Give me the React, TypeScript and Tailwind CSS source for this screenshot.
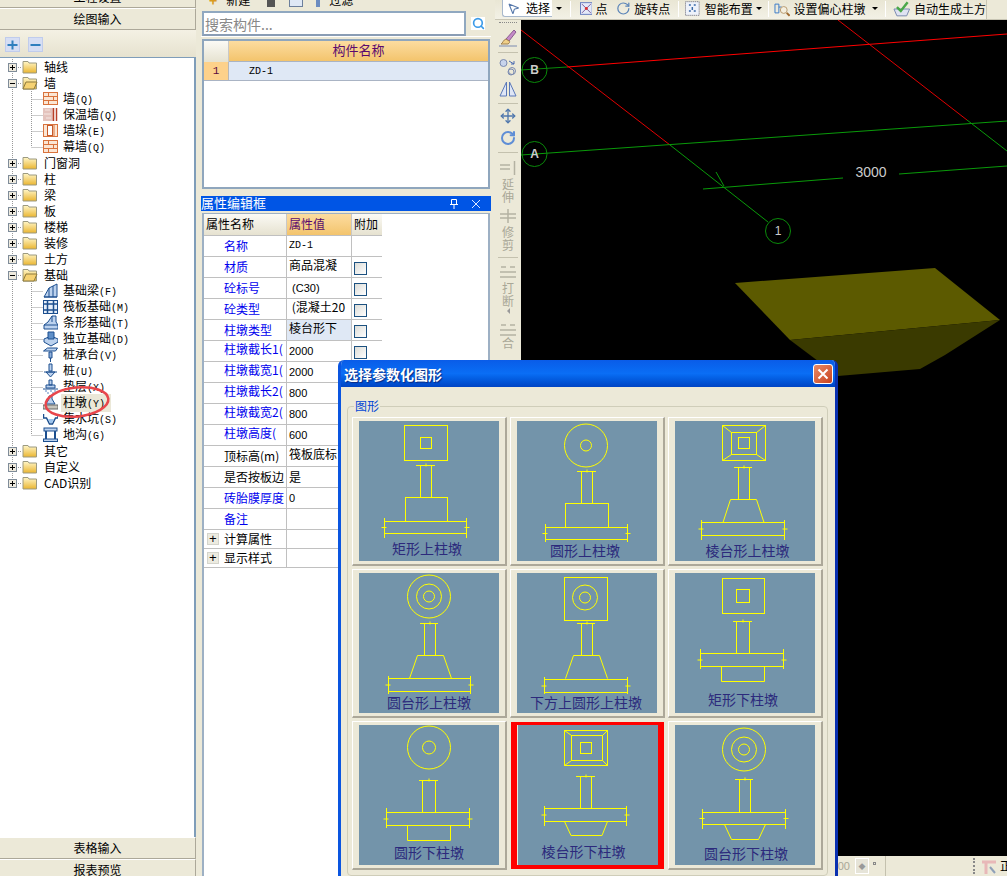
import { MousePointer2, Search, Move, RotateCw } from "lucide-react";
import type { ReactNode } from "react";

const monoText = "font-['Liberation_Mono',monospace] text-[10px]";

const Folder = ({ open }: { open?: boolean }) => (
  <svg width="16" height="14" viewBox="0 0 16 14" className="shrink-0">
    <defs>
      <linearGradient id="fold" x1="0" y1="0" x2="0" y2="1">
        <stop offset="0" stopColor="#fff6c8" />
        <stop offset="1" stopColor="#eab530" />
      </linearGradient>
    </defs>
    <path d="M1 3V1.5h5L7 3h7.5v10H1z" fill="url(#fold)" stroke="#9c9a80" />
    {open && <path d="M1 13l3-7h11l-3 7z" fill="#f6d272" stroke="#8c7a40" />}
  </svg>
);

// dotted tree lines + expander box
const Guide = ({ sign, last, child, childLast }: { sign?: string; last?: boolean; child?: boolean; childLast?: boolean }) => (
  <svg width={child ? 43 : 22} height="16" className="shrink-0">
    <g stroke="#999" strokeDasharray="1 1">
      <line x1="12.5" y1="0" x2="12.5" y2={last ? 8 : 16} />
      {child ? (
        <>
          <line x1="31.5" y1="0" x2="31.5" y2={childLast ? 8 : 16} />
          <line x1="31.5" y1="8.5" x2="43" y2="8.5" />
        </>
      ) : (
        <line x1="12" y1="8.5" x2="22" y2="8.5" />
      )}
    </g>
    {!child && (
      <>
        <rect x="8.5" y="4.5" width="8" height="8" fill="#eeeade" stroke="#7f8c99" />
        <line x1="10" y1="8.5" x2="15" y2="8.5" stroke="#000" />
        {sign === "+" && <line x1="12.5" y1="6" x2="12.5" y2="11" stroke="#000" />}
      </>
    )}
  </svg>
);

const ItemIcon = ({ kind }: { kind: string }) => {
  const blue = { fill: "#bcd2ee", stroke: "#1c4f8f" };
  let body: ReactNode = null;
  if (kind === "brick")
    body = (
      <>
        <rect x="0.5" y="1.5" width="14" height="12" fill="#fbe6d4" stroke="#d9733d" />
        <path d="M1 5.5h13M1 9.5h13M5.5 2v3.5M10.5 5.5v4M5.5 9.5v4" stroke="#d9733d" fill="none" />
      </>
    );
  if (kind === "insul")
    body = (
      <>
        <rect x="0" y="1" width="10" height="13" fill="#e4c3bd" />
        <path d="M2 3h5M1 7h7M3 11h5" stroke="#f5e8e4" />
        <path d="M10.5 1v13M13.5 1v13" stroke="#b8402a" strokeWidth="1.5" />
      </>
    );
  if (kind === "pilaster")
    body = (
      <>
        <rect x="0.5" y="1.5" width="14" height="12" fill="#fbe6d4" stroke="#d9733d" />
        <rect x="4.5" y="2.5" width="5" height="10" fill="#fff" stroke="#c65a2a" />
        <path d="M11 2v11" stroke="#d9733d" />
      </>
    );
  if (kind === "beam")
    body = (
      <>
        <path d="M1 14L6 5l8-4v13z" {...blue} />
        <path d="M6 5v9M10 3v11M1 14h13" stroke="#1c4f8f" fill="none" />
      </>
    );
  if (kind === "raft")
    body = (
      <>
        <rect x="0.5" y="1.5" width="14" height="13" fill="#e6effa" stroke="#1c4f8f" />
        <path d="M0 5h15M0 11h15M4.5 1v13M10.5 1v13" stroke="#1c4f8f" strokeWidth="1.5" />
      </>
    );
  if (kind === "strip")
    body = (
      <>
        <path d="M5 7l4-6h4v6l2 3v4H1v-4z" {...blue} />
        <path d="M9 1v6M1 10h14" stroke="#1c4f8f" />
      </>
    );
  if (kind === "iso")
    body = (
      <>
        <path d="M1 8l7-3 7 3v3l-7 4-7-4z" {...blue} />
        <path d="M5 1h6v7H5z" fill="#5f8fc8" stroke="#1c4f8f" />
      </>
    );
  if (kind === "cap")
    body = (
      <>
        <path d="M0.5 4l4-3h10l-2 3z" {...blue} />
        <path d="M6 5h3v6H6zM7.5 11v4" fill="#8fb0dc" stroke="#1c4f8f" />
      </>
    );
  if (kind === "pile")
    body = (
      <>
        <path d="M6 1h3v7H6zM3 9h9l-4.5 5z" {...blue} />
        <path d="M1 9h13" stroke="#1c4f8f" />
      </>
    );
  if (kind === "cushion")
    body = (
      <>
        <path d="M6 1h3v5H6zM3 6h9v3H3z" {...blue} />
        <path d="M0 10h15" stroke="#1c4f8f" />
        <path d="M2 12h2M7 12h2M11 12h2M4 14h2M9 14h2" stroke="#5a88c4" />
      </>
    );
  if (kind === "pier")
    body = (
      <>
        <path d="M6 1h3v3l3 5H3l3-5z" {...blue} />
        <rect x="0" y="10" width="15" height="4" fill="#c8c5bb" stroke="#666" />
      </>
    );
  if (kind === "sump")
    body = (
      <>
        <path d="M0.5 3v4h3l3 6h3l3-6h2.5V3" fill="none" stroke="#1c4f8f" strokeWidth="1.5" />
        <path d="M5 8h6l-2 4H7z" fill="#9cc4ee" />
      </>
    );
  if (kind === "ditch")
    body = (
      <>
        <rect x="1" y="1" width="13" height="3" {...blue} />
        <path d="M3 4v8M12 4v8" stroke="#1c4f8f" strokeWidth="2" />
        <rect x="0.5" y="12" width="14" height="2.5" {...blue} />
      </>
    );
  return (
    <svg width="15" height="16" viewBox="0 0 15 16" className="shrink-0">
      {body}
    </svg>
  );
};

type TreeRow = { name: string; key?: string; icon?: string; sign?: string; last?: boolean; childLast?: boolean; sel?: boolean };

const treeRows: TreeRow[] = [
  { name: "轴线", sign: "+" },
  { name: "墙", sign: "-" },
  { name: "墙", key: "Q", icon: "brick" },
  { name: "保温墙", key: "Q", icon: "insul" },
  { name: "墙垛", key: "E", icon: "pilaster" },
  { name: "幕墙", key: "Q", icon: "brick", childLast: true },
  { name: "门窗洞", sign: "+" },
  { name: "柱", sign: "+" },
  { name: "梁", sign: "+" },
  { name: "板", sign: "+" },
  { name: "楼梯", sign: "+" },
  { name: "装修", sign: "+" },
  { name: "土方", sign: "+" },
  { name: "基础", sign: "-" },
  { name: "基础梁", key: "F", icon: "beam" },
  { name: "筏板基础", key: "M", icon: "raft" },
  { name: "条形基础", key: "T", icon: "strip" },
  { name: "独立基础", key: "D", icon: "iso" },
  { name: "桩承台", key: "V", icon: "cap" },
  { name: "桩", key: "U", icon: "pile" },
  { name: "垫层", key: "X", icon: "cushion" },
  { name: "柱墩", key: "Y", icon: "pier", sel: true },
  { name: "集水坑", key: "S", icon: "sump" },
  { name: "地沟", key: "G", icon: "ditch", childLast: true },
  { name: "其它", sign: "+" },
  { name: "自定义", sign: "+" },
  { name: "CAD识别", sign: "+", last: true },
];

const SideButton = ({ label, h }: { label: string; h: string }) => (
  <div className={`${h} shrink-0 flex items-center justify-center bg-[#ece9d8] border-t border-t-white border-b border-b-[#aca899] border-r border-r-[#aca899] text-[12px] leading-none`}>
    {label}
  </div>
);

const LeftPanel = () => (
  <div className="w-[196px] h-full shrink-0 flex flex-col">
    <div className="h-[8px] shrink-0 overflow-hidden border-b border-[#aca899] border-r border-r-[#aca899]">
      <div className="-mt-[13px] h-[20px] flex items-center justify-center">工程设置</div>
    </div>
    <SideButton label="绘图输入" h="h-[22px]" />
    <div className="h-[27px] shrink-0 flex items-center gap-[8px] pl-[5px] pt-[1px] bg-linear-to-b from-[#f4f1e4] to-[#e6e2cf]">
      {["+", "-"].map((s) => (
        <svg key={s} width="15" height="15" viewBox="0 0 15 15">
          <rect x="0.5" y="0.5" width="14" height="14" fill="#d6def4" stroke="#c0ccec" />
          <path d={s === "+" ? "M2.5 8h10M7.5 3.5v9" : "M2.5 8h10"} stroke="#2f7fbe" strokeWidth="2" />
        </svg>
      ))}
    </div>
    <div className="relative flex-1 min-h-0 bg-white border-t border-r-2 border-[#7f9db9] pt-[1px]">
      {treeRows.map((r, i) => (
        <div key={i} className="h-[16px] flex items-center whitespace-nowrap leading-none">
          <Guide sign={r.sign} last={r.last} child={!r.sign} childLast={r.childLast} />
          {r.sign ? <Folder open={r.sign === "-"} /> : <ItemIcon kind={r.icon ?? ""} />}
          <span className={r.sign ? "ml-[6px]" : `ml-[3px] pl-[2px] py-[2px] pr-[6px] ${r.sel ? "bg-[#ebe8d8]" : ""}`}>
            {r.name}
            {r.key && <span className={monoText}>({r.key})</span>}
          </span>
        </div>
      ))}
      <svg width="72" height="40" viewBox="0 0 72 40" className="absolute left-[42px] top-[326px]">
        <ellipse cx="35" cy="18" rx="31.5" ry="14.5" transform="rotate(-6 35 18)" fill="none" stroke="#e8464c" strokeWidth="2.5" />
      </svg>
    </div>
    <SideButton label="表格输入" h="h-[22px]" />
    <div className="h-[17px] shrink-0 flex items-start justify-center pt-[4px] border-t border-t-white border-r border-r-[#aca899] leading-none">报表预览</div>
  </div>
);

const Check = () => <span className="w-[13px] h-[13px] border border-[#1c5180] bg-linear-to-br from-[#dcdcd7] to-white" />;

type PropRow = { name: string; value?: string; blue?: boolean; check?: boolean; up?: boolean; digits?: boolean; sel?: boolean };

const propRows: PropRow[] = [
  { name: "名称", value: "ZD-1", blue: true },
  { name: "材质", value: "商品混凝", blue: true, check: true, up: true },
  { name: "砼标号", value: " (C30)", blue: true, check: true, digits: true },
  { name: "砼类型", value: " (混凝土20", blue: true, check: true, up: true },
  { name: "柱墩类型", value: "棱台形下", blue: true, check: true, up: true, sel: true },
  { name: "柱墩截长1(", value: "2000", blue: true, check: true, digits: true },
  { name: "柱墩截宽1(", value: "2000", blue: true, digits: true },
  { name: "柱墩截长2(", value: "800", blue: true, digits: true },
  { name: "柱墩截宽2(", value: "800", blue: true, digits: true },
  { name: "柱墩高度(", value: "600", blue: true, digits: true },
  { name: "顶标高(m)", value: "筏板底标", up: true },
  { name: "是否按板边", value: "是" },
  { name: "砖胎膜厚度", value: "0", blue: true, digits: true },
  { name: "备注", blue: true },
];

const CapIcon = ({ d, c = "#6c7f9c" }: { d: string; c?: string }) => (
  <svg width="14" height="14" viewBox="0 0 14 14">
    <path d={d} stroke={c} fill="none" />
  </svg>
);

const MiddlePanel = () => (
  <div className="w-[299px] h-full shrink-0 flex flex-col pl-[5px] pr-[4px]">
    <div className="h-[10px] shrink-0 overflow-hidden">
      <div className="-mt-[10px] h-[20px] flex items-center leading-none">
        <span className="ml-[8px] text-[#d89a20] font-bold text-[14px]">+</span>
        <span className="ml-[9px]">新建</span>
        <span className="ml-[17px] w-[8px] h-[14px] bg-[#555]" />
        <span className="ml-[14px] w-[14px] h-[14px] border border-[#6c7f9c] bg-[#dfe8f5]" />
        <span className="ml-[13px] w-[4px] h-[14px] bg-[#6c8cc0]" />
        <span className="ml-[9px]">过滤</span>
      </div>
    </div>
    <div className="mt-[1px] h-[26px] shrink-0 flex items-center border-b border-white">
      <div className="ml-[1px] w-[264px] h-[25px] bg-white border-2 border-[#90a8c0] border-b-[#8a9db5] flex items-center pl-[1px] text-[14px] text-[#888] leading-none">
        搜索构件...
      </div>
      <div className="ml-[5px] w-[14px] h-[13px] bg-white flex items-center justify-center">
        <Search size={13} strokeWidth={3} className="text-[#3a9ae8]" />
      </div>
    </div>
    <div className="mt-[2px] mx-[1px] h-[150px] shrink-0 bg-white border-2 border-[#8fa6bd] pt-0">
      <div className="grid grid-cols-[25px_1fr] h-[21px] text-[13px] leading-none">
        <div className="bg-linear-to-b from-[#fbfaf5] to-[#e6e2d0] border-r border-[#c8c8c8]" />
        <div className="flex items-center justify-center pb-[3px] bg-linear-to-b from-[#fcdc9f] to-[#f3c46c] text-[#5a0a6e] border-b border-[#aab4c4]">构件名称</div>
      </div>
      <div className="grid grid-cols-[25px_1fr] h-[19px] leading-none border-b border-[#aab4c4]">
        <div className="flex items-center justify-center bg-[#fdd18a] text-[#5a0a3e] text-[11px] font-['Liberation_Mono',monospace] border-r border-[#b8b8b8]">1</div>
        <div className={`flex items-center pl-[20px] pt-[1px] bg-[#dfe8f5] ${monoText}`}>ZD-1</div>
      </div>
    </div>
    <div className="mt-[7px] h-[15px] shrink-0 bg-[#0055e5] text-white text-[13px] leading-none flex items-center">
      <span className="pb-[3px]">属性编辑框</span>
      <span className="ml-auto mr-[8px] flex items-center gap-[8px]">
        <CapIcon d="M4.5 2.5h5v5h-5zM3 7.5h8M7 8v4" c="#fff" />
        <CapIcon d="M3 3l8 8M11 3l-8 8" c="#dfe8ff" />
      </span>
    </div>
    <div className="mt-[2px] mx-[1px] flex-1 min-h-0 bg-white border-2 border-t border-b-0 border-[#9db0c4] pl-0">
      <div className="grid grid-cols-[83px_65px_30px] h-[21px] w-[178px] leading-none text-[12px]">
        <div className="flex items-center pl-[2px] pb-[1px] bg-linear-to-b from-[#fbfaf5] to-[#e6e2d0] border-r border-[#c8c8c8]">属性名称</div>
        <div className="flex items-center pl-[2px] pb-[1px] bg-linear-to-b from-[#fcdc9f] to-[#f3c46c] text-[#5a0a6e] border-r border-[#c8c8c8]">属性值</div>
        <div className="flex items-center pl-[2px] pb-[1px] bg-linear-to-b from-[#fbfaf5] to-[#e6e2d0]">附加</div>
      </div>
      {propRows.map((r) => (
        <div key={r.name} className="grid grid-cols-[83px_65px_30px] h-[21px] w-[178px] leading-none border-t border-[#c0c0c0] whitespace-nowrap">
          <div className={`flex items-center pl-[20px] overflow-hidden border-r border-[#c0c0c0] ${r.blue ? "text-[#0000ee]" : ""} ${r.name.endsWith("(") ? "pb-[5px]" : ""}`}>{r.name}</div>
          <div className={`flex overflow-hidden pl-[2px] border-r border-[#c0c0c0] ${r.sel ? "bg-[#dfe8f5]" : ""} ${r.up ? "items-start pt-[2px]" : "items-center"} ${r.digits ? "font-['Liberation_Sans',sans-serif] text-[11px]" : ""}`}>
            {r.value === "ZD-1" ? <span className={monoText}>ZD-1</span> : <span className="whitespace-pre">{r.value}</span>}
          </div>
          <div className="flex items-center pl-[2px] pt-[2px]">{r.check && <Check />}</div>
        </div>
      ))}
      {["计算属性", "显示样式"].map((n) => (
        <div key={n} className="grid grid-cols-[83px_65px] h-[19px] w-[148px] leading-none border-t border-[#c0c0c0]">
          <div className="flex items-center border-r border-[#c0c0c0]">
            <span className="ml-[3px] w-[12px] h-[12px] bg-[#ecebe0] border border-[#d4d4cc] flex items-center justify-center text-[13px] font-['Liberation_Mono',monospace]">+</span>
            <span className="ml-[5px] pb-[1px]">{n}</span>
          </div>
          <div />
        </div>
      ))}
      <div className="w-[148px] border-t border-[#c0c0c0]" />
    </div>
  </div>
);

// top command bar over the drawing area
const Sep = () => <span className="w-[1px] h-[16px] bg-[#c4c1ae] border-r border-white" />;
const Caret = () => <span className="block w-0 h-0 border-x-[3px] border-x-transparent border-t-[3px] border-t-black" />;

const TopBar = () => (
  <div className="h-[20px] shrink-0 flex border-b border-[#c8c5b4] bg-[#ece9d8]">
    <div className="w-[492px] h-full flex items-center pl-[7px] pb-[2px] leading-none whitespace-nowrap bg-linear-to-b from-[#e9e6d4] to-[#f3f1e6] border-r border-[#c8c5b4]">
      <span className="h-[17px] w-[51px] flex items-center bg-white border-l border-b border-[#a8b8cc] rounded-bl-[3px]">
        <MousePointer2 size={13} className="ml-[4px] text-[#5577aa]" />
        <span className="ml-[6px]">选择</span>
      </span>
      <span className="ml-[4px] mr-[8px]"><Caret /></span>
      <Sep />
      <svg width="13" height="13" viewBox="0 0 13 13" className="ml-[9px]">
        <rect x="0.5" y="0.5" width="12" height="12" fill="#e4e9f8" stroke="#6a7fc0" />
        <path d="M2 2l9 9M11 2l-9 9" stroke="#7a5a9a" />
        <circle cx="6.5" cy="6.5" r="1.5" fill="#e03030" />
      </svg>
      <span className="ml-[3px]">点</span>
      <RotateCw size={15} className="ml-[8px] text-[#5a84b8]" />
      <span className="ml-[4px] mr-[8px]">旋转点</span>
      <Sep />
      <svg width="15" height="15" viewBox="0 0 15 15" className="ml-[6px]">
        <rect x="0.5" y="0.5" width="14" height="14" fill="#eef2fa" stroke="#667" strokeDasharray="1 1" />
        <path d="M4 4h2M9 4h2M4 10h2M9 10h2M7.5 6v3" stroke="#3a6aa8" strokeWidth="1.5" />
      </svg>
      <span className="ml-[5px]">智能布置</span>
      <span className="ml-[3px] mr-[6px]"><Caret /></span>
      <Sep />
      <svg width="17" height="16" viewBox="0 0 17 16" className="ml-[5px]">
        <path d="M1 3h4v9H1zM5 6h3" stroke="#3a7ac8" fill="none" />
        <circle cx="10" cy="9" r="3.5" fill="#f4efe0" stroke="#b89a70" />
        <path d="M13 12l3 3" stroke="#a06a30" strokeWidth="2" />
      </svg>
      <span className="ml-[3px]">设置偏心柱墩</span>
      <span className="ml-[7px] mr-[7px]"><Caret /></span>
      <Sep />
      <svg width="18" height="16" viewBox="0 0 18 16" className="ml-[7px]">
        <path d="M1 8h16l-3 7H4z" fill="#dfe3f2" stroke="#7a8ab0" />
        <path d="M4 6l4 4 7-9" stroke="#4aa84a" strokeWidth="2.5" fill="none" />
      </svg>
      <span className="ml-[3px]">自动生成土方</span>
    </div>
  </div>
);

const DisabledText = ({ chars }: { chars: string[] }) => (
  <div className="flex flex-col items-center text-[12px] leading-[13px] text-[#a9a797]">
    {chars.map((c) => (
      <span key={c}>{c}</span>
    ))}
  </div>
);

const StripSep = () => <span className="block w-[20px] h-[1px] bg-[#c4c1ae] shrink-0" />;

const ToolStrip = () => (
  <div className="w-[26px] shrink-0 h-full flex flex-col items-center bg-[#ece9d8] overflow-hidden">
    <div className="mt-[2px] w-[18px] border-t border-dotted border-[#888] shrink-0" />
    <svg width="20" height="20" viewBox="0 0 20 20" className="mt-[5px] shrink-0">
      <path d="M16 2L8 11l3 2 7-9z" fill="#c58ac8" stroke="#8a5a90" />
      <path d="M8 11c-3 1-3 4-5 5h7c2-1 2-3 1-3z" fill="#f0d088" stroke="#a08050" />
      <path d="M1 18h18" stroke="#7a8ab0" />
    </svg>
    <div className="mt-[4px]"><StripSep /></div>
    <svg width="18" height="18" viewBox="0 0 18 18" className="mt-[5px] shrink-0">
      <circle cx="4.5" cy="5" r="3.5" fill="#c8d4ec" stroke="#7a8ab0" />
      <circle cx="13" cy="13" r="3.5" fill="none" stroke="#7a8ab0" />
      <circle cx="12" cy="14" r="3" fill="none" stroke="#7a8ab0" />
      <path d="M10 3l5 3M15 3v3h-3" stroke="#4a6ab0" fill="none" />
    </svg>
    <svg width="18" height="16" viewBox="0 0 18 16" className="mt-[5px] shrink-0">
      <path d="M7.5 1L1 15h6.5zM10.5 1L17 15h-6.5z" fill="#dfe6f6" stroke="#5a78b8" />
    </svg>
    <div className="mt-[6px]"><StripSep /></div>
    <Move size={16} className="mt-[4px] shrink-0 text-[#4f77ad]" />
    <RotateCw size={16} strokeWidth={3} className="mt-[6px] shrink-0 text-[#5f8ed6]" />
    <div className="mt-[6px]"><StripSep /></div>
    <svg width="18" height="16" viewBox="0 0 18 16" className="mt-[7px] shrink-0">
      <path d="M1 5h10M1 9h10M15.5 1v14" stroke="#b4b2a2" strokeWidth="1.5" />
    </svg>
    <div className="mt-[1px]"><DisabledText chars={["延", "伸"]} /></div>
    <svg width="18" height="16" viewBox="0 0 18 16" className="mt-[5px] shrink-0">
      <path d="M1 6h16M1 10h16M9 1v14" stroke="#b4b2a2" strokeWidth="1.5" />
    </svg>
    <div className="mt-[1px]"><DisabledText chars={["修", "剪"]} /></div>
    <div className="mt-[6px]"><StripSep /></div>
    <svg width="18" height="14" viewBox="0 0 18 14" className="mt-[6px] shrink-0">
      <path d="M1 8h16M1 13h16M2 3h5M11 3h5" stroke="#b4b2a2" strokeWidth="1.5" />
    </svg>
    <div className="mt-[3px]"><DisabledText chars={["打", "断"]} /></div>
    <span className="mt-[1px] w-0 h-0 border-y-[3px] border-y-transparent border-r-[3px] border-r-[#999]" />
    <svg width="18" height="14" viewBox="0 0 18 14" className="mt-[8px] shrink-0">
      <path d="M1 8h16M1 13h16M2 3h5M11 3h5" stroke="#b4b2a2" strokeWidth="1.5" />
    </svg>
    <DisabledText chars={["合"]} />
  </div>
);

const Canvas = () => (
  <div className="relative flex-1 min-w-0 bg-black overflow-hidden">
    <svg viewBox="521 20 486 836" width="486" height="836" className="absolute inset-0">
      <path d="M735 283L935 268L1000 320L790 340z" fill="#5c5a00" />
      <path d="M790 340L1000 320L945 355L920 369L838 376z" fill="#3a3a00" />
      <g fill="none" strokeWidth="1">
        <path d="M521 30L670 145" stroke="#e00000" />
        <path d="M838 20L967 120" stroke="#e00000" />
        <path d="M567 67L1007 34" stroke="#ff0000" />
        <path d="M521 70L567 67" stroke="#0a8a0a" />
        <path d="M521 155L1007 121" stroke="#0a9a0a" />
        <path d="M670 145L768 222" stroke="#0a9a0a" />
        <path d="M967 120L1007 151" stroke="#0a9a0a" />
        <path d="M703 189L843 178M899 174L1007 166" stroke="#0a9a0a" />
        <path d="M716 172L724 186" stroke="#0a9a0a" />
        <circle cx="534.5" cy="70" r="12.5" stroke="#0a8a0a" />
        <circle cx="534.5" cy="154" r="12.5" stroke="#0a8a0a" />
        <circle cx="778" cy="231" r="12.5" stroke="#0a8a0a" />
      </g>
      <g fontFamily="Liberation Sans, sans-serif" fill="#cccccc" textAnchor="middle">
        <text x="534.5" y="74" fontSize="12" fontWeight="bold">B</text>
        <text x="534.5" y="158" fontSize="12" fontWeight="bold">A</text>
        <text x="778" y="235" fontSize="12">1</text>
        <text x="871" y="177" fontSize="14">3000</text>
      </g>
    </svg>
  </div>
);

const StatusBar = () => (
  <div className="h-[20px] shrink-0 flex items-center justify-end bg-[#ece9d8] leading-none">
    <span className="text-[#a9a797] text-[11px] font-['Liberation_Sans',sans-serif]">00</span>
    <span className="ml-[5px] w-[14px] h-[16px] bg-[#e6e4d8] border border-white flex items-center justify-center text-[7px] text-[#999]">◆</span>
    <span className="ml-[4px] w-[3px] h-[3px] border border-[#888] mb-[6px]" />
    <span className="ml-[9px] w-[1px] h-[20px] bg-[#c4c1ae]" />
    <span className="ml-[87px] w-[2px] h-[16px] border-l-2 border-dotted border-[#888]" />
    <svg width="16" height="16" viewBox="0 0 16 16" className="ml-[6px]">
      <path d="M1 4h14M5 4v12" stroke="#e8b8b8" strokeWidth="3" />
      <path d="M9 9l5 6" stroke="#8fa0b8" strokeWidth="2" />
    </svg>
    <span className="ml-[3px] w-[7px] overflow-hidden">正</span>
  </div>
);

type Shape = ReactNode;

const Rect = (x1: number, y1: number, x2: number, y2: number) => <rect x={x1} y={y1} width={x2 - x1} height={y2 - y1} />;
const Circles = (cx: number, cy: number, rs: number[]) => rs.map((r) => <circle key={r} cx={cx} cy={cy} r={r} />);
const Col = (x1: number, x2: number, y1: number, y2: number, tick1: number, tick2: number) => (
  <path d={`M${tick1} ${y1}H${tick2}M${x1} ${y1}V${y2}M${x2} ${y1}V${y2}M${(x1 + x2) / 2} ${y1 - 2}v3`} />
);
const Slab = (x1: number, x2: number, y1: number, y2: number, t1: number, t2: number) => (
  <path d={`M${x1} ${y1}H${x2}M${x1} ${y2}H${x2}M${x1} ${t1}V${t2}M${x2} ${t1}V${t2}M${x1 - 3} ${(y1 + y2) / 2}h5M${x2 - 2} ${(y1 + y2) / 2}h5`} />
);
const Trap = (x1: number, x2: number, y1: number, x3: number, x4: number, y2: number) => <path d={`M${x3} ${y2}L${x1} ${y1}H${x2}L${x4} ${y2}`} />;
const Diags = (a: number[], b: number[]) => (
  <path
    d={`M${a[0]} ${a[1]}L${b[0]} ${b[1]}M${a[2]} ${a[1]}L${b[2]} ${b[1]}M${a[0]} ${a[3]}L${b[0]} ${b[3]}M${a[2]} ${a[3]}L${b[2]} ${b[3]}`}
  />
);

type Card = { label: string; top: number; nudge?: string; sel?: boolean; shape: Shape };

const pierCards: Card[] = [
  {
    label: "矩形上柱墩",
    top: 119,
    nudge: "-ml-[4px]",
    shape: (
      <>
        {Rect(45.5, 4.5, 88.5, 39.5)}
        {Rect(61.5, 16.5, 72.5, 27.5)}
        {Col(61.5, 72.5, 44.5, 76.5, 57, 76)}
        {Rect(46.5, 76.5, 88.5, 100.5)}
        {Slab(25.5, 107.5, 100.5, 112.5, 97, 117)}
      </>
    ),
  },
  {
    label: "圆形上柱墩",
    top: 121,
    nudge: "-ml-[4px]",
    shape: (
      <>
        {Circles(69, 24.5, [21.5, 5.5])}
        {Col(64.5, 75.5, 50.5, 82.5, 60, 79)}
        {Rect(48.5, 82.5, 91.5, 106.5)}
        {Slab(28.5, 110.5, 106.5, 118.5, 103, 123)}
      </>
    ),
  },
  {
    label: "棱台形上柱墩",
    top: 121,
    nudge: "ml-[5px]",
    shape: (
      <>
        {Rect(47.5, 4.5, 90.5, 39.5)}
        {Rect(56.5, 11.5, 81.5, 33.5)}
        {Rect(63.5, 16.5, 74.5, 27.5)}
        {Diags([47.5, 4.5, 90.5, 39.5], [56.5, 11.5, 81.5, 33.5])}
        {Col(63.5, 74.5, 46.5, 78.5, 59, 77)}
        {Trap(55.5, 81.5, 78.5, 48, 89, 101.5)}
        {Slab(26.5, 109.5, 101.5, 114.5, 99, 119)}
      </>
    ),
  },
  {
    label: "圆台形上柱墩",
    top: 121,
    shape: (
      <>
        {Circles(70, 23.5, [21.5, 12.5, 5.5])}
        {Col(65.5, 76.5, 50.5, 82.5, 61, 79)}
        {Trap(58.5, 84.5, 82.5, 50.5, 92.5, 105.5)}
        {Slab(29.5, 111.5, 105.5, 118.5, 103, 122)}
      </>
    ),
  },
  {
    label: "下方上圆形上柱墩",
    top: 121,
    nudge: "-ml-[2px]",
    shape: (
      <>
        {Rect(47.5, 4.5, 90.5, 47.5)}
        {Circles(68, 24.5, [12.5, 5.5])}
        {Col(64.5, 75.5, 50.5, 82.5, 60, 78)}
        {Trap(56.5, 82.5, 82.5, 48.5, 90.5, 105.5)}
        {Slab(27.5, 110.5, 106.5, 119.5, 104, 123)}
      </>
    ),
  },
  {
    label: "矩形下柱墩",
    top: 118,
    nudge: "-ml-[4px]",
    shape: (
      <>
        {Rect(47.5, 5.5, 89.5, 40.5)}
        {Rect(61.5, 16.5, 74.5, 29.5)}
        {Col(61.5, 74.5, 48.5, 80.5, 58, 77)}
        {Slab(25.5, 108.5, 80.5, 93.5, 76, 96)}
        <path d="M46.5 93.5V108.5H89.5V93.5" />
      </>
    ),
  },
  {
    label: "圆形下柱墩",
    top: 119,
    shape: (
      <>
        {Circles(70, 22.5, [21.5, 6.5])}
        {Col(63.5, 76.5, 55.5, 87.5, 60, 79)}
        {Slab(27.5, 110.5, 87.5, 100.5, 83, 103)}
        <path d="M48.5 100.5V115.5H91.5V100.5" />
      </>
    ),
  },
  {
    label: "棱台形下柱墩",
    top: 118,
    sel: true,
    nudge: "-ml-[8px]",
    shape: (
      <>
        {Rect(46.5, 5.5, 89.5, 40.5)}
        {Rect(53.5, 10.5, 84.5, 35.5)}
        {Rect(62.5, 17.5, 73.5, 28.5)}
        {Diags([46.5, 5.5, 89.5, 40.5], [53.5, 10.5, 84.5, 35.5])}
        {Col(62.5, 73.5, 51.5, 83.5, 58, 77)}
        {Slab(26.5, 108.5, 83.5, 96.5, 81, 101)}
        {Trap(46.5, 89.5, 96.5, 53, 84, 110.5)}
        <path d="M53 110.5H84" />
      </>
    ),
  },
  {
    label: "圆台形下柱墩",
    top: 120,
    nudge: "ml-[2px]",
    shape: (
      <>
        {Circles(69, 24.5, [21.5, 12.5, 5.5])}
        {Col(64.5, 75.5, 54.5, 87.5, 60, 78)}
        {Slab(27.5, 110.5, 87.5, 99.5, 84, 104)}
        {Trap(49.5, 90.5, 99.5, 56.5, 83.5, 114.5)}
        <path d="M56.5 114.5H83.5" />
      </>
    ),
  },
];

const PierCard = ({ label, top, nudge, sel, shape }: Card) => (
  <div
    className={
      sel
        ? "m-[1px] flex justify-center border-t-[3px] border-x-[6px] border-b-[4px] border-[#ff0000]"
        : "flex justify-center pt-[3px] border-t border-l border-white border-r-2 border-b-2 border-r-[#aca899] border-b-[#aca899]"
    }
  >
    <div className="w-[140px] h-[140px] bg-[#7394aa] overflow-hidden flex flex-col items-center">
      <svg width="140" height={top} viewBox={`0 0 140 ${top}`} fill="none" stroke="#ffff00" className="shrink-0">
        {shape}
      </svg>
      <span className={`-mt-[2px] text-[14px] leading-[20px] text-[#2c2a7c] whitespace-nowrap ${nudge ?? ""}`}>{label}</span>
    </div>
  </div>
);

const ParamDialog = () => (
  <div className="absolute left-[338px] top-[360px] w-[500px] h-[530px] flex flex-col rounded-t-[6px] overflow-hidden bg-[#ece9d8] border-l-[3px] border-l-[#0a55e0] border-r-[3px] border-r-[#0a30b0]">
    <div className="h-[27px] shrink-0 -mx-[3px] flex items-center pl-[6px] pr-[5px] bg-linear-to-b from-[#0a5ce8] via-[#0a6ef5] to-[#0044c4]">
      <span className="text-white font-bold text-[14px] leading-none [text-shadow:1px_1px_1px_#0a2a80]">选择参数化图形</span>
      <span className="ml-auto w-[20px] h-[20px] rounded-[3px] border border-white bg-linear-to-br from-[#e88a64] to-[#c8401c] flex items-center justify-center">
        <svg width="12" height="12" viewBox="0 0 12 12">
          <path d="M1.5 1.5l9 9M10.5 1.5l-9 9" stroke="#fff" strokeWidth="2" />
        </svg>
      </span>
    </div>
    <fieldset className="mt-[11px] mx-[6px] w-[481px] h-[478px] shrink-0 border border-[#cfcdb9] rounded-[4px] px-[4px]">
      <legend className="ml-[2px] px-[1px] text-[12px] leading-[16px] text-[#0046d5]">图形</legend>
      <div className="mt-[3px] grid grid-cols-[155px_155px_155px] grid-rows-[149px_149px_149px] gap-[3px]">
        {pierCards.map((c) => (
          <PierCard key={c.label} {...c} />
        ))}
      </div>
    </fieldset>
  </div>
);

export default function App() {
  return (
    <div className="relative w-[1007px] h-[876px] overflow-hidden flex bg-[#ece9d8] text-black text-[12px] font-['Noto_Sans_CJK_SC',sans-serif]">
      <LeftPanel />
      <MiddlePanel />
      <div className="flex-1 min-w-0 h-full flex flex-col">
        <TopBar />
        <div className="flex-1 min-h-0 flex">
          <ToolStrip />
          <Canvas />
        </div>
        <StatusBar />
      </div>
      <ParamDialog />
    </div>
  );
}
